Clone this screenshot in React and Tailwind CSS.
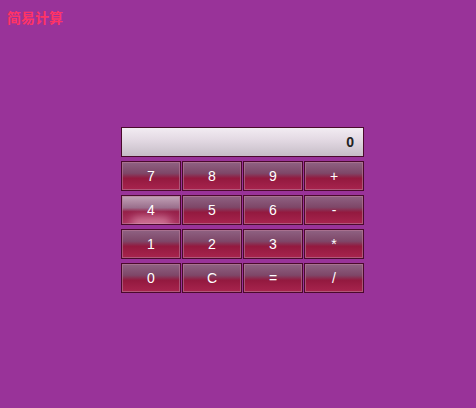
import React, { useState } from 'react';

const keys = ['7', '8', '9', '+', '4', '5', '6', '-', '1', '2', '3', '*', '0', 'C', '=', '/'];

const Key = ({ label, hot, onClick }) => (
  <button
    onClick={onClick}
    className={
      'relative h-[30px] w-[60px] border border-[#4a0a2c] text-white text-[14px] leading-none overflow-hidden ' +
      (hot
        ? 'bg-[linear-gradient(to_bottom,#c3a3b8_0%,#9a6f8c_42%,#962049_56%,#ad3462_100%)]'
        : 'bg-[linear-gradient(to_bottom,#8f6383_0%,#7e4768_40%,#93193f_58%,#a8244e_100%)]')
    }
    style={{ fontFamily: '"Liberation Sans", Arial, sans-serif' }}
  >
    <span className="absolute inset-0 border border-[#b97a98]/60 pointer-events-none" />
    {hot && (
      <span className="absolute left-1/2 bottom-[-6px] -translate-x-1/2 w-[40px] h-[14px] rounded-full bg-[#f0b0c8]/50 blur-[4px] pointer-events-none" />
    )}
    <span className="relative">{label}</span>
  </button>
);

export default function App() {
  const [value, setValue] = useState('0');

  const press = (k) => {
    if (k === 'C') return setValue('0');
    if (k === '=') {
      try {
        // eslint-disable-next-line no-new-func
        setValue(String(Function('return ' + value)()));
      } catch (e) {
        setValue('0');
      }
      return;
    }
    setValue(value === '0' ? k : value + k);
  };

  return (
    <div
      className="w-[476px] h-[408px] bg-[#993399] relative"
      style={{ fontFamily: '"Liberation Sans", "Noto Sans CJK SC", sans-serif' }}
    >
      <h1 className="pt-[9px] pl-[7px] text-[14px] font-bold text-[#ff3366] leading-[18px]">简易计算</h1>
      <div className="pt-[100px] pl-[121px]">
        <div className="w-[243px] h-[30px] border border-[#4a0a2c] bg-[linear-gradient(to_bottom,#f2ecf2_0%,#e4dae4_40%,#c6bdc7_100%)] flex items-center justify-end pr-[9px] text-[14px] font-bold text-[#222]">
          {value}
        </div>
        <div className="mt-[4px] grid grid-cols-[repeat(4,60px)] gap-x-[1px] gap-y-[4px]">
          {keys.map((k) => (
            <Key key={k} label={k} hot={k === '4'} onClick={() => press(k)} />
          ))}
        </div>
      </div>
    </div>
  );
}
